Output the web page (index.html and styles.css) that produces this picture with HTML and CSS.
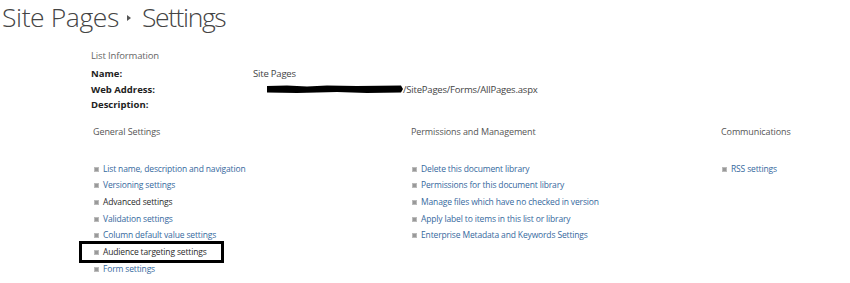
FILE: index.html
```html
<!DOCTYPE html>
<html lang="en">
<head>
    <meta charset="UTF-8">
    <title>Site Pages - Settings</title>
    <link rel="stylesheet" href="styles.css">
</head>
<body>
    <h1 class="page-title">Site Pages <span class="crumb-arrow"></span> <span class="crumb-current">Settings</span></h1>
    <div class="settings-page">
        <section class="list-info">
            <h2>List Information</h2>
            <div class="info-row">
                <span class="info-label">Name:</span>
                <span class="info-value">Site Pages</span>
            </div>
            <div class="info-row">
                <span class="info-label">Web Address:</span>
                <span class="info-value"><svg class="redact" width="136" height="10" viewBox="0 0 136 10"><path d="M0 2 L20 1.5 L40 2.5 L60 1.5 L90 2 L134 1.5 L136 5 L134 8.5 L100 9 L70 8 L30 9 L0 8.5 Z" fill="#000"/></svg>/SitePages/Forms/AllPages.aspx</span>
            </div>
            <div class="info-row">
                <span class="info-label">Description:</span>
                <span class="info-value"></span>
            </div>
        </section>
        <div class="settings-grid">
            <section class="settings-group">
                <h3>General Settings</h3>
                <ul>
                    <li><a href="#">List name, description and navigation</a></li>
                    <li><a href="#">Versioning settings</a></li>
                    <li><a href="#" class="visited">Advanced settings</a></li>
                    <li><a href="#">Validation settings</a></li>
                    <li><a href="#">Column default value settings</a></li>
                    <li class="highlight"><a href="#" class="visited">Audience targeting settings</a></li>
                    <li><a href="#">Form settings</a></li>
                </ul>
            </section>
            <section class="settings-group">
                <h3>Permissions and Management</h3>
                <ul>
                    <li><a href="#">Delete this document library</a></li>
                    <li><a href="#">Permissions for this document library</a></li>
                    <li><a href="#">Manage files which have no checked in version</a></li>
                    <li><a href="#">Apply label to items in this list or library</a></li>
                    <li><a href="#">Enterprise Metadata and Keywords Settings</a></li>
                </ul>
            </section>
            <section class="settings-group">
                <h3>Communications</h3>
                <ul>
                    <li><a href="#">RSS settings</a></li>
                </ul>
            </section>
        </div>
    </div>
</body>
</html>
```

FILE: styles.css
```css
body {
    margin: 0;
    padding: 0;
    background-color: #fff;
    font-family: "Open Sans", "Noto Sans", sans-serif;
    color: #333;
}
.page-title {
    margin: 0;
    padding: 0 0 0 2px;
    font-size: 26.5px;
    font-weight: 300;
    line-height: 34px;
    color: #444;
    letter-spacing: -0.4px;
}
.crumb-current {
    letter-spacing: -1.4px;
}
.crumb-arrow {
    display: inline-block;
    width: 0;
    height: 0;
    border-top: 3px solid transparent;
    border-bottom: 3px solid transparent;
    border-left: 4px solid #555;
    vertical-align: middle;
    margin: 0 4px 4px 2px;
}
.settings-page {
    padding-left: 91px;
    padding-top: 15px;
}
.list-info h2 {
    margin: 0 0 3px 0;
    font-size: 9.5px;
    font-weight: 400;
    line-height: 14px;
    color: #666;
    letter-spacing: -0.15px;
}
.info-row {
    display: flex;
    font-size: 9.5px;
    line-height: 15.5px;
}
.info-label {
    width: 162px;
    font-weight: 700;
    color: #222;
}
.info-value {
    color: #444;
    display: flex;
    align-items: center;
    letter-spacing: -0.2px;
}
.redact {
    display: block;
    margin-left: 14px;
}
.settings-grid {
    display: grid;
    grid-template-columns: 318px 310px 1fr;
    padding-left: 2px;
    margin-top: 12px;
}
.settings-group h3 {
    margin: 0 0 22px 0;
    font-size: 9px;
    font-weight: 400;
    line-height: 14px;
    color: #555;
    letter-spacing: -0.1px;
}
.settings-group ul {
    list-style-type: none;
    margin: 0;
    padding: 0;
}
.settings-group li {
    position: relative;
    font-size: 8.5px;
    line-height: 16.7px;
    padding-left: 10px;
    letter-spacing: -0.15px;
}
.settings-group li::before {
    content: "";
    position: absolute;
    left: 1px;
    top: 6px;
    width: 3px;
    height: 3px;
    border: 1px solid #bbb;
    background-color: #999;
}
.settings-group a {
    text-decoration: none;
    color: #36699e;
}
.settings-group a.visited {
    color: #2b2b2b;
}
.highlight::after {
    content: "";
    position: absolute;
    left: -14px;
    top: -3px;
    width: 139px;
    height: 16px;
    border: 3px solid #000;
}
```
